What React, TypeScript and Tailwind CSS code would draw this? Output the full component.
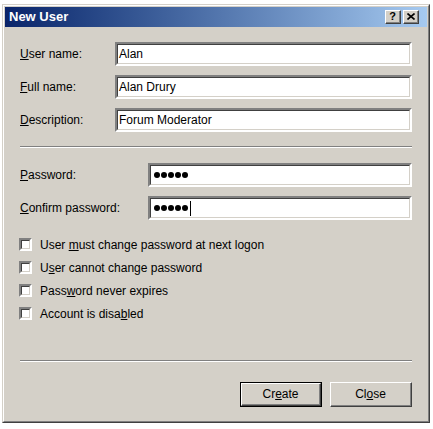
import React from "react";

const sunken =
  "border-2 border-t-[#808080] border-l-[#808080] border-r-white border-b-white";

function Field({ value, children }: { value?: string; children?: React.ReactNode }) {
  return (
    <div className={`flex-1 h-[24px] ${sunken}`}>
      <div className="h-full border border-t-[#404040] border-l-[#404040] border-r-[#d4d0c8] border-b-[#d4d0c8] bg-white flex items-center pl-[1px] text-[12px] text-black">
        {value}
        {children}
      </div>
    </div>
  );
}

function Dots({ caret }: { caret?: boolean }) {
  return (
    <div className="flex items-center gap-[1px] pl-[2px]">
      {[0, 1, 2, 3, 4].map((i) => (
        <span key={i} className="w-[6px] h-[6px] rounded-full bg-black" />
      ))}
      {caret && <span className="ml-[1px] w-px h-[15px] bg-black" />}
    </div>
  );
}

function Label({ children, w }: { children: React.ReactNode; w: string }) {
  return <div className={`${w} shrink-0 text-[12px] text-black`}>{children}</div>;
}

function Check({ children }: { children: React.ReactNode }) {
  return (
    <div className="flex items-center h-[13px]">
      <div className={`w-[13px] h-[13px] ${sunken} -ml-px`}>
        <div className="h-full border border-t-[#404040] border-l-[#404040] border-r-[#d4d0c8] border-b-[#d4d0c8] bg-white" />
      </div>
      <span className="ml-[8px] text-[12px] text-black leading-none">{children}</span>
    </div>
  );
}

function Separator() {
  return (
    <div>
      <div className="h-px bg-[#808080]" />
      <div className="h-px bg-white" />
    </div>
  );
}

function CaptionButton({ children }: { children: React.ReactNode }) {
  return (
    <div className="w-[16px] h-[14px] border border-t-white border-l-white border-r-[#404040] border-b-[#404040] bg-[#d4d0c8]">
      <div className="h-full border-r border-b border-r-[#808080] border-b-[#808080] flex items-center justify-center">
        {children}
      </div>
    </div>
  );
}

function PushButton({ children, primary }: { children: React.ReactNode; primary?: boolean }) {
  const face = (
    <div className="h-full border border-t-white border-l-white border-r-[#404040] border-b-[#404040]">
      <div className="h-full border-r border-b border-r-[#808080] border-b-[#808080] flex items-center justify-center text-[12px] text-black">
        {children}
      </div>
    </div>
  );
  return (
    <div className={`w-[82px] h-[25px] ${primary ? "border border-black" : ""}`}>{face}</div>
  );
}

export default function App() {
  return (
    <div
      className="min-h-screen bg-white pt-[4px] pl-[2px]"
      style={{ fontFamily: '"Liberation Sans", Arial, sans-serif' }}
    >
      <div className="w-[428px] h-[419px] border border-t-[#d4d0c8] border-l-[#d4d0c8] border-r-[#404040] border-b-[#404040] bg-[#d4d0c8]">
        <div className="h-full border border-t-white border-l-white border-r-[#808080] border-b-[#808080] p-px flex flex-col">
          {/* title bar */}
          <div className="h-[20px] shrink-0 flex items-center justify-between bg-gradient-to-r from-[#0a246a] to-[#a6caf0] pl-[4px] pr-[8px]">
            <span className="text-white font-bold text-[13px]">New User</span>
            <div className="flex gap-[2px]">
              <CaptionButton>
                <span className="text-[11px] font-bold leading-none text-black">?</span>
              </CaptionButton>
              <CaptionButton>
                <svg width="8" height="7" viewBox="0 0 8 7">
                  <path d="M0.5 0.5 7.5 6.5M7.5 0.5 0.5 6.5" stroke="black" strokeWidth="1.6" />
                </svg>
              </CaptionButton>
            </div>
          </div>

          <div className="flex-1 flex flex-col px-[15px]">
            <div className="mt-[15px] flex flex-col gap-[9px]">
              <div className="flex items-center">
                <Label w="w-[95px]"><u>U</u>ser name:</Label>
                <Field value="Alan" />
              </div>
              <div className="flex items-center">
                <Label w="w-[95px]"><u>F</u>ull name:</Label>
                <Field value="Alan Drury" />
              </div>
              <div className="flex items-center">
                <Label w="w-[95px]"><u>D</u>escription:</Label>
                <Field value="Forum Moderator" />
              </div>
            </div>

            <div className="mt-[14px]">
              <Separator />
            </div>

            <div className="mt-[15px] flex flex-col gap-[9px]">
              <div className="flex items-center">
                <Label w="w-[128px]"><u>P</u>assword:</Label>
                <Field>
                  <Dots />
                </Field>
              </div>
              <div className="flex items-center">
                <Label w="w-[128px]"><u>C</u>onfirm password:</Label>
                <Field>
                  <Dots caret />
                </Field>
              </div>
            </div>

            <div className="mt-[18px] flex flex-col gap-[10px]">
              <Check>User <u>m</u>ust change password at next logon</Check>
              <Check>U<u>s</u>er cannot change password</Check>
              <Check>Pass<u>w</u>ord never expires</Check>
              <Check>Account is disa<u>b</u>led</Check>
            </div>

            <div className="mt-[40px]">
              <Separator />
            </div>

            <div className="mt-[20px] flex justify-end gap-[8px]">
              <PushButton primary>
                Cr<u>e</u>ate
              </PushButton>
              <PushButton>
                Cl<u>o</u>se
              </PushButton>
            </div>
          </div>
        </div>
      </div>
    </div>
  );
}
